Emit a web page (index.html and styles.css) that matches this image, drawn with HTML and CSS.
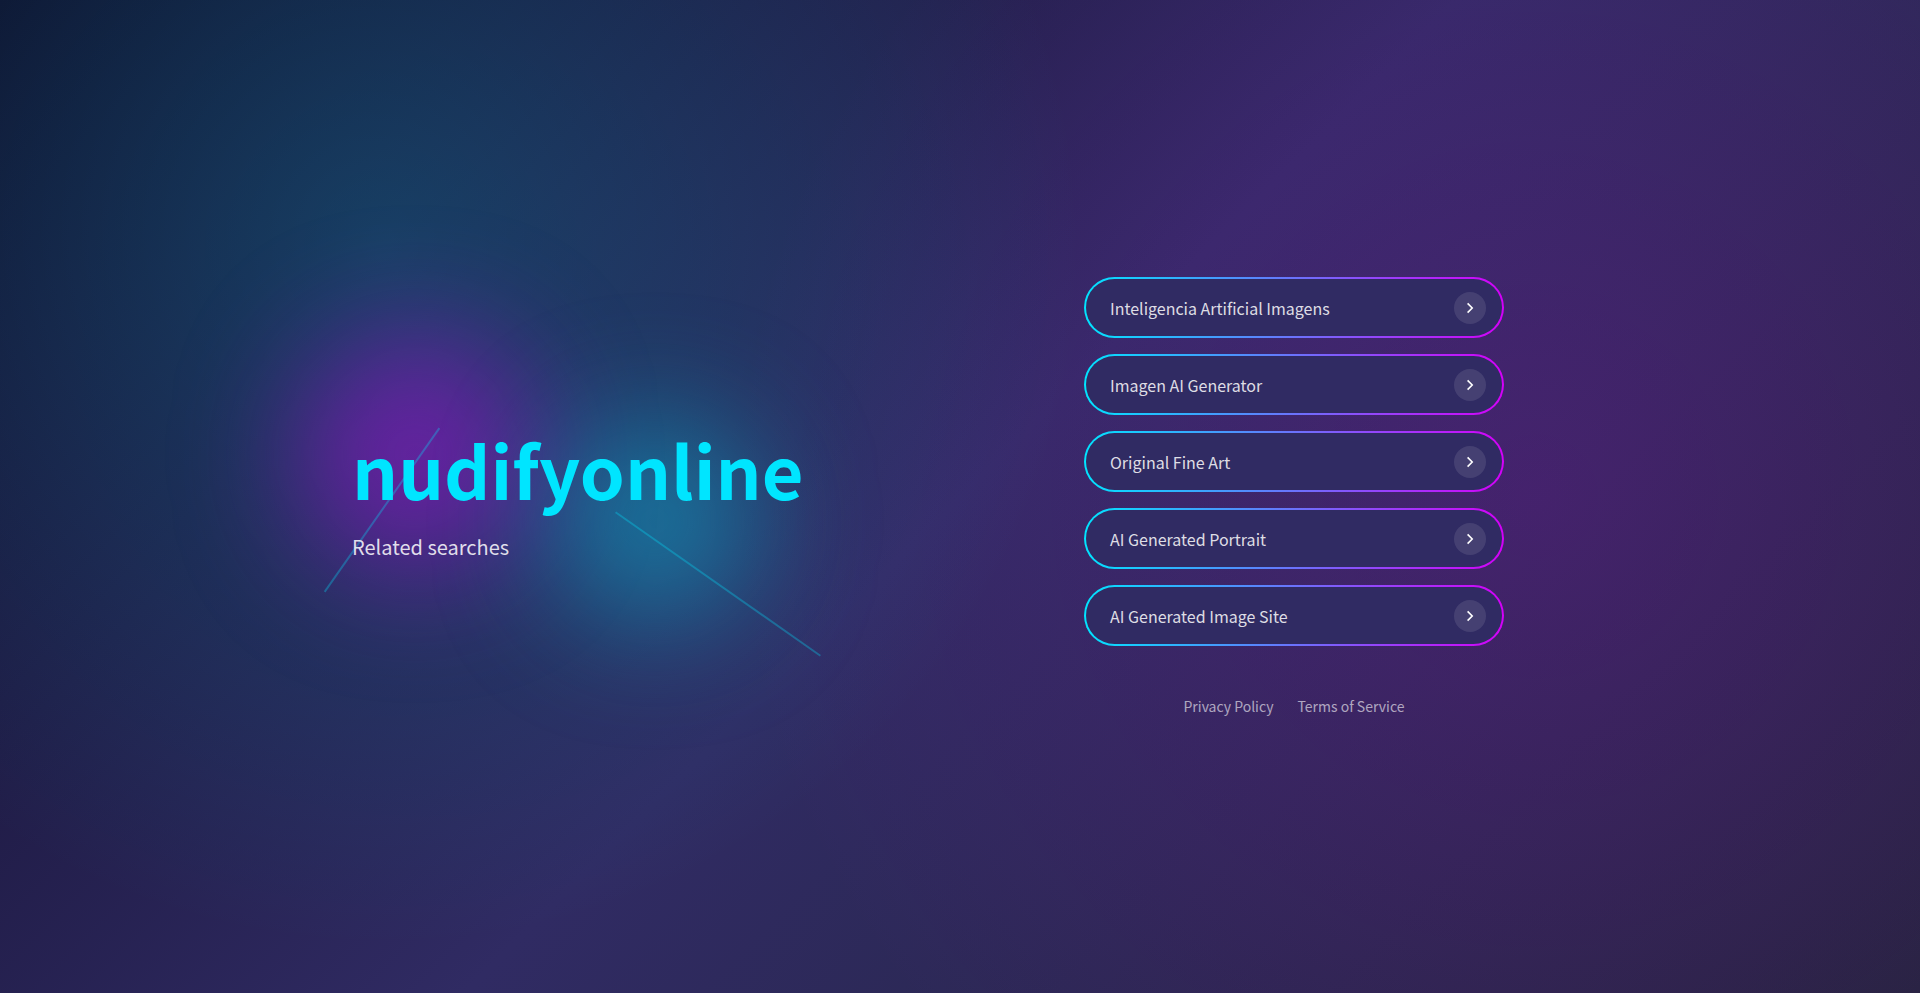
FILE: index.html
```html
<!DOCTYPE html>
<html lang="en">
<head>
    <meta charset="UTF-8">
    <meta name="viewport" content="width=device-width, initial-scale=1.0">
    <title>nudifyonline</title>
    <link rel="stylesheet" href="styles.css">
</head>
<body>
    <main class="container">
        <section class="hero">
            <div class="glow glow-purple"></div>
            <div class="glow glow-cyan"></div>
            <div class="line line-left"></div>
            <div class="line line-right"></div>
            <h1 class="title">nudifyonline</h1>
            <p class="subtitle">Related searches</p>
        </section>

        <section class="links">
            <nav class="link-list">
                <a class="link-card" href="#">
                    <span>Inteligencia Artificial Imagens</span>
                    <span class="arrow"><svg viewBox="0 0 16 16"><path d="M5.6 3.4L10.2 8l-4.6 4.6"/></svg></span>
                </a>
                <a class="link-card" href="#">
                    <span>Imagen AI Generator</span>
                    <span class="arrow"><svg viewBox="0 0 16 16"><path d="M5.6 3.4L10.2 8l-4.6 4.6"/></svg></span>
                </a>
                <a class="link-card" href="#">
                    <span>Original Fine Art</span>
                    <span class="arrow"><svg viewBox="0 0 16 16"><path d="M5.6 3.4L10.2 8l-4.6 4.6"/></svg></span>
                </a>
                <a class="link-card" href="#">
                    <span>AI Generated Portrait</span>
                    <span class="arrow"><svg viewBox="0 0 16 16"><path d="M5.6 3.4L10.2 8l-4.6 4.6"/></svg></span>
                </a>
                <a class="link-card" href="#">
                    <span>AI Generated Image Site</span>
                    <span class="arrow"><svg viewBox="0 0 16 16"><path d="M5.6 3.4L10.2 8l-4.6 4.6"/></svg></span>
                </a>
            </nav>
            <footer class="footer">
                <a href="#">Privacy Policy</a>
                <a href="#">Terms of Service</a>
            </footer>
        </section>
    </main>
</body>
</html>
```
FILE: styles.css
```css
* {
    box-sizing: border-box;
    margin: 0;
    padding: 0;
}
body {
    min-height: 100vh;
    display: flex;
    align-items: center;
    justify-content: center;
    overflow-x: hidden;
    font-family: "Noto Sans CJK JP", "Noto Sans", sans-serif;
    color: #fff;
    background:
        radial-gradient(circle at 20% 25%, rgba(0, 229, 255, 0.19), transparent 41%),
        radial-gradient(circle at 80% 50%, rgba(213, 0, 249, 0.15), transparent 50%),
        linear-gradient(135deg, #0f0c29, #302b63 50%, #24243e);
}
a {
    color: inherit;
    text-decoration: none;
}
.container {
    width: 100%;
    max-width: 1216px;
    display: grid;
    grid-template-columns: 1fr 1fr;
    gap: 120px;
    align-items: center;
}

/* Left side */
.hero {
    position: relative;
}
.title {
    position: relative;
    font-size: 72px;
    font-weight: 700;
    line-height: 80px;
    color: #00e5ff;
}
.subtitle {
    position: relative;
    margin-top: 20px;
    font-size: 20px;
    line-height: 36px;
    color: rgba(255, 255, 255, 0.85);
}
.glow {
    position: absolute;
    border-radius: 50%;
    filter: blur(60px);
}
.glow-purple {
    top: -95px;
    left: -57px;
    width: 240px;
    height: 240px;
    background: rgba(176, 10, 225, 0.5);
}
.glow-cyan {
    top: -8px;
    left: 203px;
    width: 200px;
    height: 200px;
    background: rgba(12, 180, 215, 0.52);
}
.line {
    position: absolute;
    height: 2px;
    background: #00e5ff;
    opacity: 0.3;
}
.line-left {
    top: 80px;
    left: -70px;
    width: 200px;
    transform: rotate(-55deg);
}
.line-right {
    top: 154px;
    left: 241px;
    width: 250px;
    transform: rotate(35deg);
}

/* Right side */
.links {
    width: 100%;
    max-width: 420px;
    margin: 0 auto;
}
.link-list {
    display: flex;
    flex-direction: column;
    gap: 16px;
}
.link-card {
    display: flex;
    align-items: center;
    justify-content: space-between;
    min-height: 61px;
    padding: 0 16px 0 24px;
    border: 2px solid transparent;
    border-radius: 32px;
    font-size: 16px;
    line-height: 24px;
    color: rgba(255, 255, 255, 0.85);
    background:
        linear-gradient(#302b63, #302b63) padding-box,
        linear-gradient(90deg, #00e5ff, #d500f9) border-box;
}
.arrow {
    display: flex;
    align-items: center;
    justify-content: center;
    width: 32px;
    height: 32px;
    border-radius: 50%;
    background: rgba(255, 255, 255, 0.1);
}
.arrow svg {
    width: 16px;
    height: 16px;
    fill: none;
    stroke: #fff;
    stroke-width: 1.6;
}
.footer {
    display: flex;
    justify-content: center;
    gap: 24px;
    margin-top: 50px;
    font-size: 14px;
    line-height: 20px;
    color: rgba(255, 255, 255, 0.6);
}
```
